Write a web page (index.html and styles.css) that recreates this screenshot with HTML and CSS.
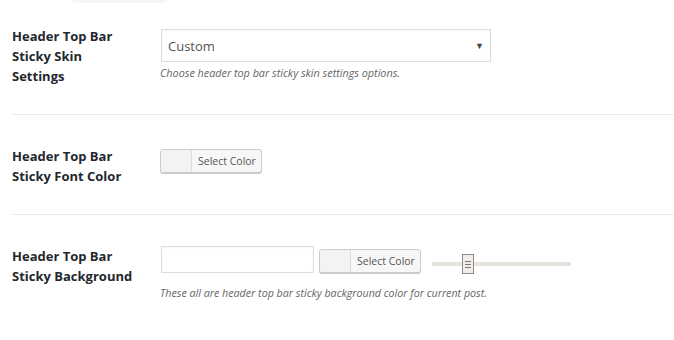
FILE: index.html
```html
<!DOCTYPE html>
<html>
<head>
    <title>Header Top Bar Sticky</title>
    <link rel="stylesheet" href="styles.css">
</head>
<body>
    <div class="prev-edge"></div>

    <div class="field-row">
        <div class="field-label">Header Top Bar Sticky Skin Settings</div>
        <div class="field-body">
            <div class="select-box">
                <span>Custom</span>
                <span class="select-arrow">&#9660;</span>
            </div>
            <p class="field-desc">Choose header top bar sticky skin settings options.</p>
        </div>
    </div>

    <div class="field-row">
        <div class="field-label">Header Top Bar Sticky Font Color</div>
        <div class="field-body">
            <button type="button" class="color-btn">
                <span class="swatch"></span>
                <span class="color-text">Select Color</span>
            </button>
        </div>
    </div>

    <div class="field-row no-border">
        <div class="field-label">Header Top Bar Sticky Background</div>
        <div class="field-body">
            <div class="inline-controls">
                <input type="text" class="text-input">
                <button type="button" class="color-btn">
                    <span class="swatch"></span>
                    <span class="color-text">Select Color</span>
                </button>
                <div class="slider">
                    <div class="slider-track"></div>
                    <div class="slider-handle"><i></i><i></i><i></i></div>
                </div>
            </div>
            <p class="field-desc desc-gap">These all are header top bar sticky background color for current post.</p>
        </div>
    </div>
</body>
</html>
```

FILE: styles.css
```css
body {
    margin: 0;
    background: #fff;
    font-family: "Open Sans", "Noto Sans", sans-serif;
    color: #23282d;
}

.prev-edge {
    width: 92px;
    height: 3px;
    margin-left: 73px;
    background: #f6f6f6;
}

.field-row {
    display: flex;
    margin-left: 12px;
    padding: 23px 0 28px;
    border-bottom: 1px solid #ececec;
}

.field-row + .field-row {
    padding-top: 31px;
}

.field-row.no-border {
    border-bottom: none;
}

.field-label {
    width: 124px;
    flex: none;
    margin-right: 24px;
    font-size: 13px;
    font-weight: 700;
    line-height: 20px;
    color: #23282d;
}

.field-body {
    padding-top: 3px;
}

.select-box {
    display: flex;
    justify-content: space-between;
    align-items: center;
    width: 316px;
    height: 31px;
    padding: 0 6px;
    margin-left: 1px;
    border: 1px solid #ddd;
    box-shadow: inset 0 1px 2px rgba(0, 0, 0, 0.04);
    font-size: 13px;
    color: #555;
}

.select-arrow {
    font-size: 9px;
    color: #444;
}

.field-desc {
    margin: 3px 0 0;
    font-size: 10.8px;
    font-style: italic;
    color: #666;
}

.desc-gap {
    margin-top: 12px;
    font-size: 10.7px;
}

.color-btn {
    display: flex;
    align-items: stretch;
    height: 24px;
    padding: 0;
    border: 1px solid #ccc;
    border-radius: 3px;
    background: #f7f7f7;
    box-shadow: 0 1px 0 #ccc;
    font-family: inherit;
    cursor: pointer;
}

.swatch {
    width: 30px;
    border-right: 1px solid #ddd;
    border-radius: 2px 0 0 2px;
    background: #f3f3f3;
}

.color-text {
    display: flex;
    align-items: center;
    padding: 0 5px 0 6px;
    font-size: 10.5px;
    color: #555;
}

.inline-controls {
    display: flex;
    align-items: flex-start;
    margin-top: -3px;
}

.inline-controls .color-btn {
    margin-left: 5px;
    margin-top: 3px;
}

.text-input {
    width: 153px;
    height: 27px;
    box-sizing: border-box;
    margin: 0 0 0 1px;
    border: 1px solid #ddd;
    box-shadow: inset 0 1px 2px rgba(0, 0, 0, 0.04);
}

.slider {
    position: relative;
    width: 139px;
    height: 20px;
    margin-left: 11px;
    margin-top: 8px;
}

.slider-track {
    margin-top: 8px;
    height: 4px;
    background: #e6e2dc;
}

.slider-handle {
    position: absolute;
    left: 30px;
    top: 0;
    display: flex;
    flex-direction: column;
    justify-content: center;
    gap: 2px;
    width: 12px;
    height: 20px;
    box-sizing: border-box;
    border: 1px solid #8c8c8c;
    background: #f1eee9;
}

.slider-handle i {
    display: block;
    height: 1px;
    margin: 0 2px;
    background: #777;
}
```
